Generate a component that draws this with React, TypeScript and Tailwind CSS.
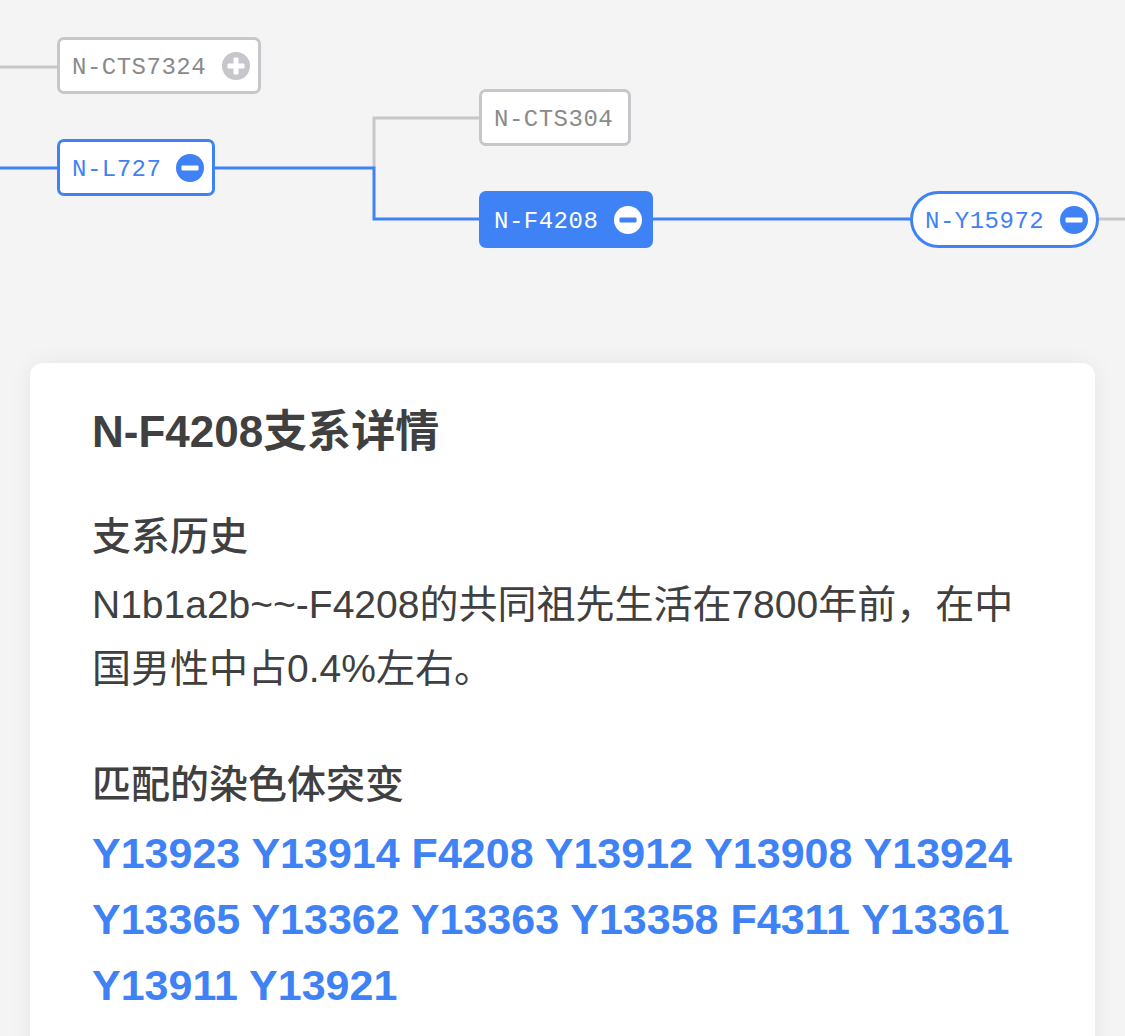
import React from 'react';

const BLUE = '#3f82f5';
const GRAY = '#c6c6cb';

type Tone = 'gray' | 'blue' | 'solid';

const ToggleIcon = ({ tone, open }: { tone: Tone; open: boolean }) => {
  const circle = tone === 'gray' ? GRAY : tone === 'blue' ? BLUE : '#ffffff';
  const bar = tone === 'solid' ? BLUE : '#ffffff';
  return (
    <svg width="28" height="28" viewBox="0 0 28 28" className="shrink-0">
      <circle cx="14" cy="14" r="14" fill={circle} />
      <rect x="5.5" y="11.5" width="17" height="5" rx="1" fill={bar} />
      {!open && <rect x="11.5" y="5.5" width="5" height="17" rx="1" fill={bar} />}
    </svg>
  );
};

const NodeChip = ({
  label,
  tone,
  icon,
  className,
}: {
  label: string;
  tone: Tone;
  icon?: 'open' | 'closed';
  className: string;
}) => {
  const toneClass =
    tone === 'gray'
      ? 'border-[#c6c6cb] bg-white text-[#8a8a8a]'
      : tone === 'blue'
        ? 'border-[#3f82f5] bg-white text-[#3f82f5]'
        : 'border-[#3f82f5] bg-[#3f82f5] text-white';
  return (
    <div
      className={`absolute flex h-[57px] items-center justify-between border-[3px] pl-[12px] pr-[8px] ${toneClass} ${className}`}
    >
      <span className="pt-[4px] font-['Liberation_Mono',monospace] text-[24px] leading-none tracking-[0.5px]">
        {label}
      </span>
      {icon && <ToggleIcon tone={tone} open={icon === 'open'} />}
    </div>
  );
};

function BranchTree() {
  return (
    <div className="relative h-[363px] w-full overflow-hidden">
      {/* connectors */}
      <svg className="absolute inset-0" width="1125" height="363" fill="none" strokeWidth="3">
        <path d="M0 67H57" stroke={GRAY} />
        <path d="M0 168H57" stroke={BLUE} />
        <path d="M374 168V118H479" stroke={GRAY} />
        <path d="M1099 219H1125" stroke={GRAY} />
        <path d="M215 168H374V219H479" stroke={BLUE} />
        <path d="M653 219H910" stroke={BLUE} />
      </svg>

      <NodeChip label="N-CTS7324" tone="gray" icon="closed" className="left-[57px] top-[37px] w-[204px] rounded-[7px]" />
      <NodeChip label="N-L727" tone="blue" icon="open" className="left-[57px] top-[139px] w-[158px] rounded-[7px]" />
      <NodeChip label="N-CTS304" tone="gray" className="left-[479px] top-[89px] w-[152px] rounded-[7px]" />
      <NodeChip label="N-F4208" tone="solid" icon="open" className="left-[479px] top-[191px] w-[174px] rounded-[7px]" />
      <NodeChip label="N-Y15972" tone="blue" icon="open" className="left-[910px] top-[191px] w-[189px] rounded-full pl-[11px]" />
    </div>
  );
}

const mutations = [
  'Y13923 Y13914 F4208 Y13912 Y13908 Y13924',
  'Y13365 Y13362 Y13363 Y13358 F4311 Y13361',
  'Y13911 Y13921',
];

export default function App() {
  return (
    <div className="min-h-screen w-full overflow-hidden bg-[#f4f4f5] font-['Liberation_Sans','Noto_Sans_CJK_SC',sans-serif] text-[#404040]">
      <BranchTree />

      <section className="mx-[30px] rounded-[13px] bg-white px-[62px] pb-[80px] pt-[39px] shadow-[0_0_24px_rgba(0,0,0,0.06)]">
        <h1 className="text-[44px] font-bold leading-[60px]">N-F4208支系详情</h1>

        <h2 className="mt-[45px] text-[39px] font-medium leading-[60px]">支系历史</h2>
        <p className="mt-[6px] text-[39px] leading-[64px]">
          N1b1a2b~~-F4208的共同祖先生活在7800年前，在中
          <br />
          国男性中占0.4%左右。
        </p>

        <h2 className="mt-[54px] text-[39px] font-medium leading-[60px]">匹配的染色体突变</h2>
        <div className="mt-[5px] text-[43px] font-bold leading-[66px] text-[#3f82f5]">
          {mutations.map((row) => (
            <div key={row} className="whitespace-nowrap">
              {row}
            </div>
          ))}
        </div>
      </section>
    </div>
  );
}
